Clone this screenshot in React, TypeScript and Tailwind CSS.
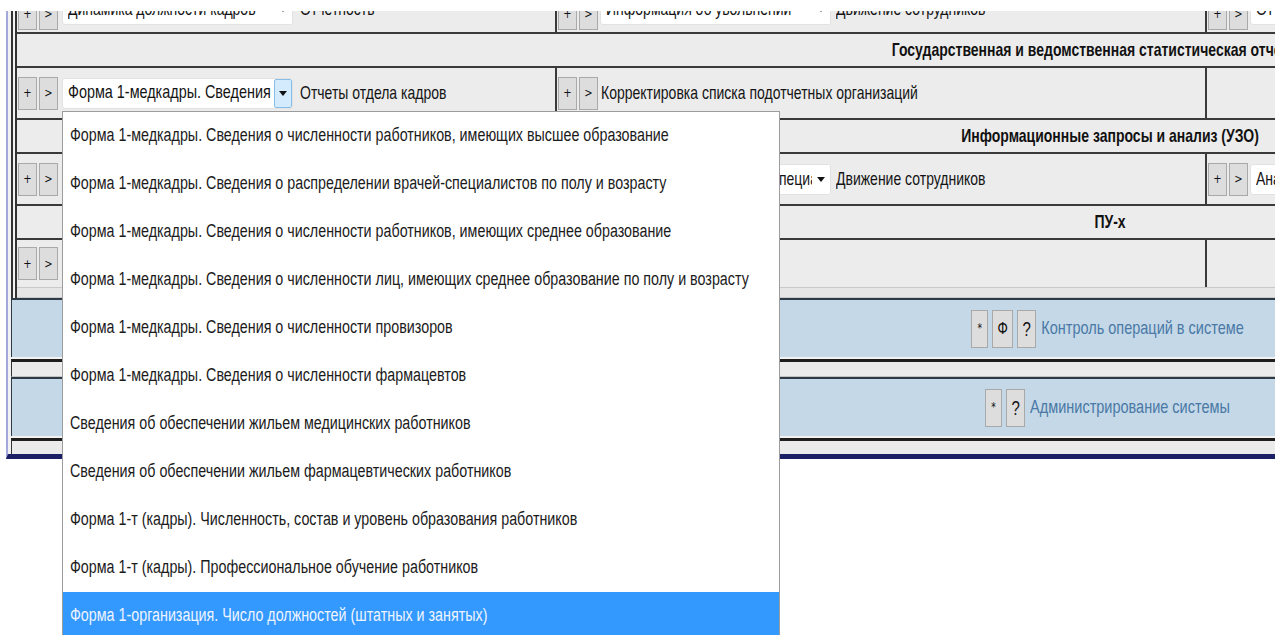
import React from "react";

const reportForms = [
  "Форма 1-медкадры. Сведения о численности работников, имеющих высшее образование",
  "Форма 1-медкадры. Сведения о распределении врачей-специалистов по полу и возрасту",
  "Форма 1-медкадры. Сведения о численности работников, имеющих среднее образование",
  "Форма 1-медкадры. Сведения о численности лиц, имеющих среднее образование по полу и возрасту",
  "Форма 1-медкадры. Сведения о численности провизоров",
  "Форма 1-медкадры. Сведения о численности фармацевтов",
  "Сведения об обеспечении жильем медицинских работников",
  "Сведения об обеспечении жильем фармацевтических работников",
  "Форма 1-т (кадры). Численность, состав и уровень образования работников",
  "Форма 1-т (кадры). Профессиональное обучение работников",
  "Форма 1-организация. Число должностей (штатных и занятых)",
];

// tall, narrow lettering of the old client
const T = ({ children, className = "" }: { children: React.ReactNode; className?: string }) => (
  <span className={`inline-block scale-y-[1.3] whitespace-nowrap ${className}`}>{children}</span>
);

const Btn = ({ children, className = "" }: { children: React.ReactNode; className?: string }) => (
  <span
    className={`flex shrink-0 items-center justify-center border border-[#a9a9a9] bg-[#dddddd] font-['DejaVu_Sans',sans-serif] leading-none text-[#111] ${className}`}
  >
    <T>{children}</T>
  </span>
);

const RowBtns = () => (
  <div className="flex shrink-0 gap-[2px]">
    <Btn className="h-[33px] w-[19px] text-[10px]">+</Btn>
    <Btn className="h-[33px] w-[19px] text-[10px]">&gt;</Btn>
  </div>
);

const Arrow = () => (
  <svg width="8" height="5" viewBox="0 0 8 5">
    <path d="M0 0h8L4 5z" fill="#111" />
  </svg>
);

const Select = ({ text, focused = false, className = "" }: { text: string; focused?: boolean; className?: string }) => (
  <div
    className={`relative flex h-[31px] w-[231px] shrink-0 items-center overflow-hidden rounded-[3px] border border-[#e2e2e2] bg-white ${className}`}
  >
    <T className="pl-[5px]">{text}</T>
    <span
      className={`absolute top-0 right-0 bottom-0 flex w-[18px] items-center justify-center ${
        focused ? "rounded-[2px] border border-[#86bde9] bg-[#d3ebfc]" : "bg-white"
      }`}
    >
      <Arrow />
    </span>
  </div>
);

const Row = ({ children, className = "h-[52px]" }: { children: React.ReactNode; className?: string }) => (
  <div className={`flex border-t-2 border-[#3a3a3a] bg-[#ececec] ${className}`}>{children}</div>
);

const Cell = ({ children, className = "" }: { children?: React.ReactNode; className?: string }) => (
  <div className={`flex items-center border-r-2 border-[#3a3a3a] pl-[1px] ${className}`}>{children}</div>
);

const Header = ({ title }: { title: string }) => (
  <div className="flex h-[34px] items-center justify-center border-t-2 border-[#3a3a3a] bg-[#ececec] font-bold text-[#111]">
    <T>{title}</T>
  </div>
);

const Panel = ({ title, withForm = false }: { title: string; withForm?: boolean }) => (
  <div className="flex h-[59px] items-center justify-center gap-[4px] border-t-2 border-l border-[#2e3a46] bg-[#c4d8e7]">
    <Btn className="h-[38px] w-[17px] text-[9px]">*</Btn>
    {withForm && <Btn className="h-[38px] w-[21px] text-[12px]">Ф</Btn>}
    <Btn className="h-[38px] w-[19px] font-['Liberation_Sans',sans-serif] text-[15px]">?</Btn>
    <T className="pl-[1px] text-[14.5px] text-[#4a79a6]">{title}</T>
  </div>
);

export default function App() {
  return (
    <div className="relative h-[635px] w-[1275px] overflow-hidden bg-white font-['Liberation_Sans',sans-serif] text-[14px] text-[#141414]">
      <div className="h-[11px] bg-white" />
      <div className="h-[624px] overflow-hidden">
        <div className="-mt-[18px] ml-[6px] w-[2202px] border-l-2 border-b-[5px] border-l-[#a5a8dc] border-b-[#1b1f66] bg-[#f2f2f2] pl-[3px]">
          {/* main form table */}
          <div className="w-[2192px] border-l-2 border-[#333] pl-[2px]">
            <div className="border-l-2 border-[#333]">
              <Row className="h-[39px]">
                <Cell className="w-[540px]">
                  <RowBtns />
                  <Select text="Динамика должности кадров" className="mb-[9px] ml-[4px]" />
                  <T className="mb-[9px] ml-[7px]">Отчетность</T>
                </Cell>
                <Cell className="w-[650px]">
                  <RowBtns />
                  <Select text="Информация об увольнении" className="mb-[9px] ml-[2px]" />
                  <T className="mb-[9px] ml-[5px]">Движение сотрудников</T>
                </Cell>
                <Cell className="flex-1">
                  <RowBtns />
                  <Select text="Отчеты" className="mb-[9px] ml-[2px]" />
                </Cell>
              </Row>

              <Header title="Государственная и ведомственная статистическая отчетность" />

              <Row>
                <Cell className="w-[540px]">
                  <RowBtns />
                  <Select text="Форма 1-медкадры. Сведения" focused className="ml-[4px] text-[14.4px]" />
                  <T className="ml-[7px]">Отчеты отдела кадров</T>
                </Cell>
                <Cell className="w-[650px]">
                  <RowBtns />
                  <T className="ml-[3px]">Корректировка списка подотчетных организаций</T>
                </Cell>
                <Cell className="flex-1" />
              </Row>

              <Header title="Информационные запросы и анализ (УЗО)" />

              <Row>
                <Cell className="w-[540px]">
                  <RowBtns />
                </Cell>
                <Cell className="w-[650px]">
                  <RowBtns />
                  <Select text="Сведения о численности специалистов" className="ml-[2px]" />
                  <T className="ml-[5px]">Движение сотрудников</T>
                </Cell>
                <Cell className="flex-1">
                  <RowBtns />
                  <Select text="Анализ кадрового состава" className="ml-[2px]" />
                </Cell>
              </Row>

              <Header title="ПУ-х" />

              <Row className="h-[49px]">
                <Cell className="w-[540px]">
                  <RowBtns />
                </Cell>
                <Cell className="w-[650px]" />
                <Cell className="flex-1" />
              </Row>
              <div className="h-[11px] border-t border-b border-[#c9c9c9] bg-[#e6e6e6]" />
            </div>
          </div>

          <div className="w-[2192px]">
            <Panel title="Контроль операций в системе" withForm />
            <div className="mt-[2px] h-[18px] border-t-[3px] border-b border-t-[#1e1e1e] border-b-[#c2c2c2] border-l border-l-[#333] bg-[#ebebeb]" />
            <Panel title="Администрирование системы" />
            <div className="mt-[2px] h-[16px] border-t-[3px] border-t-[#1e1e1e] border-l border-l-[#333] bg-[#ebebeb]" />
          </div>
        </div>
      </div>

      {/* open dropdown of report forms */}
      <ul className="absolute top-[111px] left-[62px] h-[540px] w-[718px] border border-[#9c9c9c] bg-white text-[14.3px]">
        {reportForms.map((item, i) => (
          <li
            key={i}
            className={`flex h-[48px] items-center pl-[7px] ${
              i === reportForms.length - 1 ? "bg-[#3399ff] text-[#eef4ff]" : "text-[#1b1b1b]"
            }`}
          >
            <T>{item}</T>
          </li>
        ))}
      </ul>
    </div>
  );
}
